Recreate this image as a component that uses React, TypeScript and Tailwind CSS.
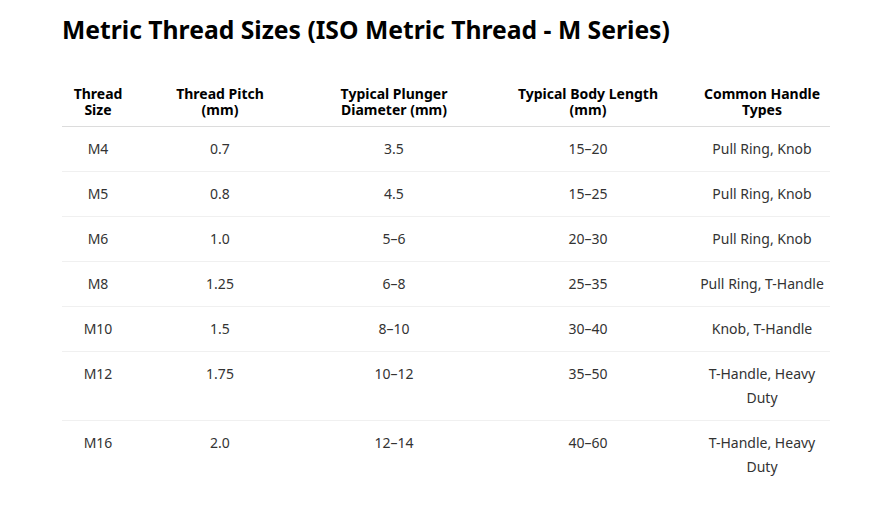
import React from "react";

const rows: [string, string, string, string, string][] = [
  ["M4", "0.7", "3.5", "15–20", "Pull Ring, Knob"],
  ["M5", "0.8", "4.5", "15–25", "Pull Ring, Knob"],
  ["M6", "1.0", "5–6", "20–30", "Pull Ring, Knob"],
  ["M8", "1.25", "6–8", "25–35", "Pull Ring, T-Handle"],
  ["M10", "1.5", "8–10", "30–40", "Knob, T-Handle"],
  ["M12", "1.75", "10–12", "35–50", "T-Handle, Heavy Duty"],
  ["M16", "2.0", "12–14", "40–60", "T-Handle, Heavy Duty"],
];

export default function App() {
  return (
    <div className="min-h-[525px] bg-white" style={{ fontFamily: '"Noto Sans", "Open Sans", sans-serif' }}>
      <div className="mx-auto max-w-3xl pt-[14px]">
        <h1 className="text-[24.7px] font-bold leading-[32px] text-black">
          Metric Thread Sizes (ISO Metric Thread - M Series)
        </h1>
        <table className="mt-[30px] w-full table-fixed border-collapse text-center text-[14px]">
          <colgroup>
            <col className="w-[72px]" />
            <col className="w-[172px]" />
            <col className="w-[176px]" />
            <col className="w-[212px]" />
            <col className="w-[136px]" />
          </colgroup>
          <thead>
            <tr className="border-b border-[#dcdcdc]">
              <th className="px-1 pt-[10px] pb-[8px] align-bottom font-bold leading-[16px] text-black">Thread<br />Size</th>
              <th className="px-1 pt-[10px] pb-[8px] align-bottom font-bold leading-[16px] text-black">Thread Pitch<br />(mm)</th>
              <th className="px-1 pt-[10px] pb-[8px] align-bottom font-bold leading-[16px] text-black">Typical Plunger<br />Diameter (mm)</th>
              <th className="px-1 pt-[10px] pb-[8px] align-bottom font-bold leading-[16px] text-black">Typical Body Length<br />(mm)</th>
              <th className="px-1 pt-[10px] pb-[8px] align-bottom font-bold leading-[16px] text-black">Common Handle<br />Types</th>
            </tr>
          </thead>
          <tbody>
            {rows.map((r, i) => (
              <tr key={i} className={i < rows.length - 1 ? "border-b border-[#f0f0f0]" : ""}>
                {r.map((c, j) => (
                  <td key={j} className="px-1 py-[10px] align-top leading-[24px] text-[#333]">
                    {c}
                  </td>
                ))}
              </tr>
            ))}
          </tbody>
        </table>
      </div>
    </div>
  );
}
